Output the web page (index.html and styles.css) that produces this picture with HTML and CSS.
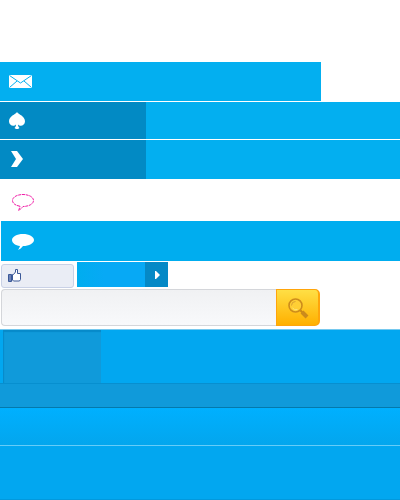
FILE: index.html
```
<!DOCTYPE html>
<html lang="en">
<head>
<meta charset="utf-8">
<title>Interface elements</title>
<link rel="stylesheet" href="styles.css">
</head>
<body>
<div class="bar mail"><svg width="23" height="13" viewBox="0 0 23 13"><path fill="#fff" d="M0 0h23v13H0z"/><path d="M.5.5l11 7.500 11-7.500M.5 12.500L8 6M22.500 12.500L15 6" fill="none" stroke="#03aff0"/></svg></div>
<div class="bar split spade"><div class="tab"><svg width="16" height="17" viewBox="0 0 16 17"><path fill="#fff" d="M8 0C9.500 2.500 16 4 16 9.300c0 4.500-5 5.700-7 3.200 0 1.500.5 2.500 1.500 3.500L9 17H7l-1.500-1C6.500 15 7 14 7 12.500 5 15 0 13.800 0 9.300 0 4 6.500 2.500 8 0z"/></svg></div></div>
<div class="bar split arrow"><div class="tab"><svg width="12" height="16" viewBox="0 0 12 16"><path fill="#fff" d="M0 0h6l6 8-6 8H0l5-8z"/></svg></div></div>
<div class="outline"><svg width="22" height="18" viewBox="0 0 22 18"><path d="M8 12.300C3.500 11.500.5 9.300.5 6.500.5 3.200 5 .5 11 .5s10.500 2.700 10.500 6-4.500 6-10.500 6c-1.500 2-3 3-4.500 4Q7.500 14.500 8 12.300z" fill="none" stroke="#f01ca6" stroke-dasharray="3 .7"/></svg></div>
<div class="bar bubble"><svg width="22" height="16" viewBox="0 0 22 16"><path fill="#fff" d="M8 12C3.500 11.500 0 9 0 6 0 2.700 4.900 0 11 0s11 2.700 11 6-4.900 6-11 6c-1.500 2-3 3.300-5 4q1.500-2 2-4z"/></svg></div>
<div class="actions">
  <div class="like"><svg width="13" height="13" viewBox="0 0 13 13"><path fill="#6e83b7" stroke="#3b5998" d="M.5 5.500h3v7h-3z"/><path fill="#fff" stroke="#3b5998" d="M4.500 5.500h1l2-2.500V.5h2v4h3v6l-1 1.500H5.500l-1-1z"/></svg></div>
  <div class="go"><div class="go-end"><svg width="5" height="8" viewBox="0 0 5 8"><path fill="#fff" d="M0 0h1l4 4-4 4H0z"/></svg></div></div>
</div>
<div class="search">
  <div class="field"></div>
  <div class="button"><svg width="21" height="21" viewBox="0 0 21 21"><path d="M12 12l2.500 2.500" stroke="#c98716" stroke-width="2"/><path d="M14 14l5 5" stroke="#cb8a1c" stroke-width="4"/><circle cx="7.500" cy="7.500" r="6.500" fill="#ffcf35" stroke="#cd8c1c" stroke-width="1.600"/><path d="M3.500 7.500a4 4 0 0 1 4-4" fill="none" stroke="#d9a033"/><path d="M4.500 10a4 4 0 0 0 5 1.500" fill="none" stroke="#ffe680"/></svg></div>
</div>
<div class="nav"><div class="current"></div></div>
<div class="subnav"></div>
<div class="gradient"></div>
<div class="base"></div>
</body>
</html>
```
FILE: styles.css
```
* { box-sizing: border-box; }
body { margin: 0; padding-top: 62px; height: 500px; overflow: hidden; background: #fff; }
svg { display: block; flex: none; }
.bar { background: #03aff0; }
.mail { width: 321px; height: 39px; padding: 13px 9px; }
.split { display: flex; margin-top: 1px; }
.tab { width: 146px; background: #028ac4; }
.spade { height: 37px; }
.spade .tab { padding: 10px 9px; }
.arrow { height: 39px; }
.arrow .tab { padding: 11px; }
.outline { height: 42px; padding: 15px 12px; }
.bubble { height: 40px; margin-left: 1px; padding: 13px 11px; background: #00adef; }
.actions { display: flex; height: 28px; padding: 1px 0 0 1px; }
.like { width: 73px; height: 24px; margin-top: 2px; padding: 4px 6px; border: 1px solid #c9d1e6; border-radius: 3px; background: #eaedf5; }
.go { display: flex; justify-content: flex-end; width: 91px; height: 25px; margin-left: 3px; background: linear-gradient(90deg, #00adef, #07a9f5 30%); }
.go-end { width: 23px; padding: 9px 10px; background: #0589c6; }
.search { display: flex; width: 319px; height: 37px; margin-left: 1px; }
.field { width: 275px; border: 1px solid #d4d6da; border-right: 0; border-radius: 4px 0 0 4px; background: linear-gradient(#f0f1f3, #f8f9fb); }
.button { width: 44px; padding: 8px 11px; border: 1px solid #ffa50b; border-right-width: 2px; border-radius: 0 5px 5px 0; background: linear-gradient(#ffdf45, #ffb000); }
.nav { height: 54px; margin-top: 3px; padding-left: 3px; border-top: 1px solid #75c9ef; background: #02a7f0; }
.current { width: 98px; height: 53px; background: #109ada; box-shadow: inset 1px 2px 1px #078ac9; }
.subnav { height: 25px; border-top: 1px solid #078fcf; border-bottom: 1px solid #0479ac; background: #109ada; }
.gradient { height: 37px; background: linear-gradient(#00b0ff, #03a6ed); }
.base { height: 55px; border-top: 1px solid #66ccf8; border-bottom: 1px solid #0299dd; background: #02a7f0; }
```
